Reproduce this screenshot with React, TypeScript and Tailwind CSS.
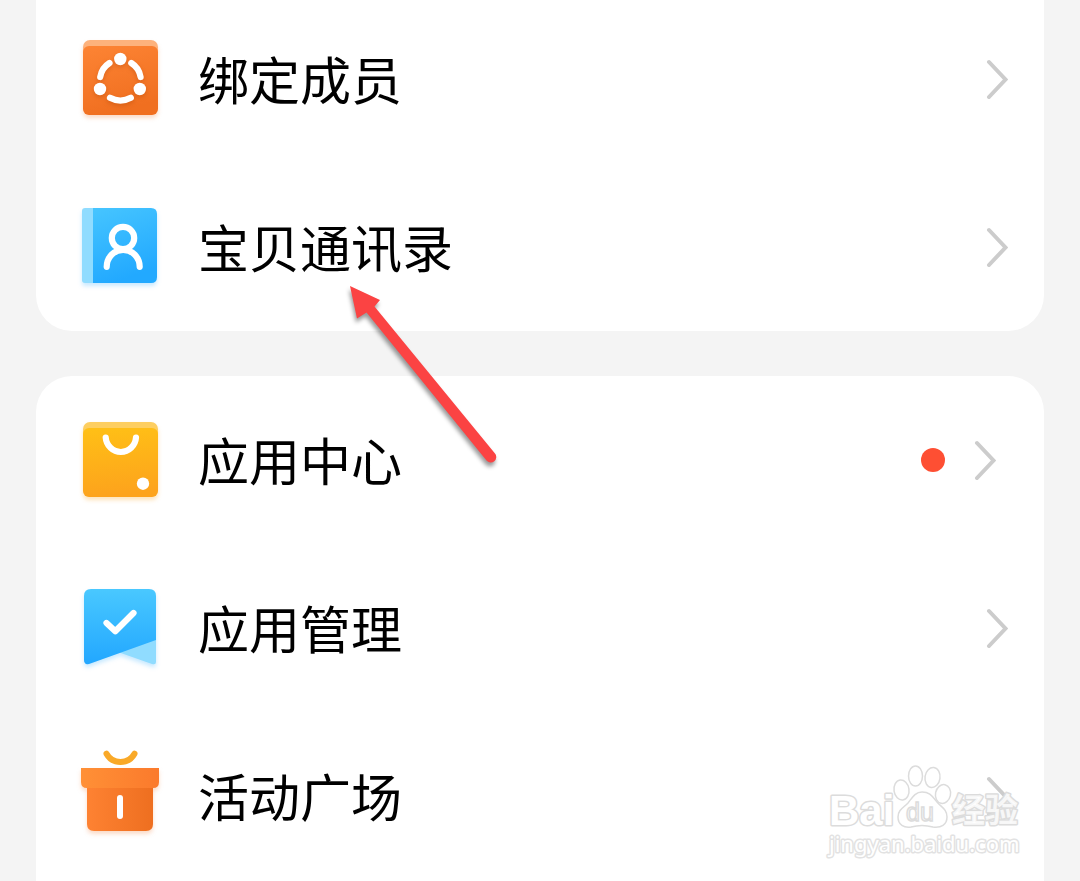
import type { ReactNode } from 'react';

interface MenuItem {
  label: string;
  icon: ReactNode;
  hasBadge?: boolean;
}

function MembersIcon() {
  return (
    <svg viewBox="0 0 96 96" className="size-24 shrink-0" aria-hidden="true">
      <defs>
        <linearGradient id="members-bg" x1="0" y1="0" x2="0.3" y2="1">
          <stop offset="0" stopColor="#fd8434" />
          <stop offset="1" stopColor="#f06f20" />
        </linearGradient>
      </defs>
      <g className="drop-shadow-[0_3px_2px_rgba(240,111,32,0.25)]">
        <rect x="11" y="9" width="75" height="40" rx="7" fill="#fdb27c" />
        <rect x="11" y="15" width="75" height="69" rx="6" fill="url(#members-bg)" />
      </g>
      <g className="drop-shadow-[0_2px_2px_rgba(160,60,0,0.3)]">
        <g fill="none" stroke="#fff" strokeWidth="6.2" strokeLinecap="round">
          <path d="M37.5 32A20.4 20.4 0 0 0 28.2 46" />
          <path d="M59.3 32A20.4 20.4 0 0 1 68.6 46" />
          <path d="M38 66.8A21.7 21.7 0 0 0 58.8 66.8" />
        </g>
        <g fill="#fff">
          <circle cx="48.3" cy="28" r="6.2" />
          <circle cx="28" cy="58" r="6.2" />
          <circle cx="67.8" cy="58" r="6.2" />
        </g>
      </g>
    </svg>
  );
}

function ContactsIcon() {
  return (
    <svg viewBox="0 0 96 96" className="size-24 shrink-0" aria-hidden="true">
      <defs>
        <linearGradient id="contacts-bg" x1="0" y1="0" x2="0.3" y2="1">
          <stop offset="0" stopColor="#46c5ff" />
          <stop offset="1" stopColor="#22a9ff" />
        </linearGradient>
      </defs>
      <g className="drop-shadow-[0_3px_2px_rgba(34,169,255,0.25)]">
        <path d="M13 9H22V84H13Q10 84 10 81V12Q10 9 13 9Z" fill="#90dcff" />
        <path d="M21 9H79Q85 9 85 15V78Q85 84 79 84H21Z" fill="url(#contacts-bg)" />
      </g>
      <g fill="none" stroke="#fff" strokeWidth="6.2" strokeLinecap="round">
        <circle cx="51" cy="39" r="11.2" />
        <path d="M34.7 67.8A16.5 17 0 0 1 67.7 67.8" />
      </g>
    </svg>
  );
}

function AppCenterIcon() {
  return (
    <svg viewBox="0 0 96 96" className="size-24 shrink-0" aria-hidden="true">
      <defs>
        <linearGradient id="center-bg" x1="0" y1="0" x2="0.1" y2="1">
          <stop offset="0" stopColor="#ffc016" />
          <stop offset="1" stopColor="#fda31c" />
        </linearGradient>
      </defs>
      <g className="drop-shadow-[0_3px_2px_rgba(253,163,28,0.3)]">
        <rect x="11" y="10" width="75" height="40" rx="7" fill="#fdce60" />
        <rect x="11" y="16" width="75" height="69" rx="6" fill="url(#center-bg)" />
      </g>
      <path
        d="M33.7 25.5A15.2 15.8 0 0 0 64 25.5"
        fill="none"
        stroke="#fff"
        strokeWidth="6.2"
        strokeLinecap="round"
      />
      <circle cx="71" cy="71.7" r="6.2" fill="#fff" />
    </svg>
  );
}

function AppManageIcon() {
  return (
    <svg viewBox="0 0 96 96" className="size-24 shrink-0" aria-hidden="true">
      <defs>
        <linearGradient id="manage-bg" x1="0" y1="0" x2="0" y2="1">
          <stop offset="0" stopColor="#49c8ff" />
          <stop offset="1" stopColor="#22a7ff" />
        </linearGradient>
      </defs>
      <g className="drop-shadow-[0_3px_2px_rgba(34,169,255,0.25)]">
        <path d="M46 72L84 59V82Q84 85 80 84Z" fill="#90dcff" />
        <path d="M19 9H77Q84 9 84 16V60L17 84Q12 85 12 80V16Q12 9 19 9Z" fill="url(#manage-bg)" />
      </g>
      <path
        d="M34.5 43L43.3 51.3L61.5 33"
        fill="none"
        stroke="#fff"
        strokeWidth="6.2"
        strokeLinecap="round"
        strokeLinejoin="round"
      />
    </svg>
  );
}

function ActivityIcon() {
  return (
    <svg viewBox="0 0 96 96" className="size-24 shrink-0" aria-hidden="true">
      <defs>
        <linearGradient id="gift-lid" x1="0" y1="0" x2="1" y2="0">
          <stop offset="0" stopColor="#ff9036" />
          <stop offset="1" stopColor="#fb7a2c" />
        </linearGradient>
        <linearGradient id="gift-box" x1="0" y1="0" x2="1" y2="0">
          <stop offset="0" stopColor="#fe8232" />
          <stop offset="1" stopColor="#ee6f20" />
        </linearGradient>
      </defs>
      <path
        d="M34.5 5.7A16 16 0 0 0 62.5 5.7"
        fill="none"
        stroke="#f9a928"
        strokeWidth="6"
        strokeLinecap="round"
      />
      <g className="drop-shadow-[0_3px_2px_rgba(240,111,32,0.25)]">
        <path d="M15 36H81V76Q81 83 74 83H22Q15 83 15 76Z" fill="url(#gift-box)" />
        <path d="M9 20H87V34Q87 40 81 40H15Q9 40 9 34Z" fill="url(#gift-lid)" />
      </g>
      <rect x="45" y="47" width="6" height="24" rx="3" fill="#fff" />
    </svg>
  );
}

function ChevronIcon() {
  return (
    <svg
      viewBox="0 0 24 40"
      className="h-10 w-6 shrink-0"
      fill="none"
      stroke="#cccccc"
      strokeWidth="4"
      strokeLinecap="round"
      aria-hidden="true"
    >
      <path d="M5 3L21.5 20.5L5 38" />
    </svg>
  );
}

// Red pointer drawn over both cards
function PointerArrow() {
  return (
    <svg
      viewBox="0 0 160 190"
      className="pointer-events-none absolute top-[280px] left-[344px] h-[190px] w-[160px] drop-shadow-[-1px_4px_2px_rgba(0,0,0,0.4)]"
      aria-hidden="true"
    >
      <path
        d="M6 6L36 20L30.5 26.5L151 173.5A5.5 5.5 0 0 1 142.5 180.5L22.5 32.5L13 38.5Z"
        fill="#fb4343"
      />
    </svg>
  );
}

function Watermark() {
  return (
    <svg
      viewBox="0 0 210 100"
      className="pointer-events-none absolute right-[50px] bottom-[21px] h-[100px] w-[210px] fill-white stroke-[#dcdcdc]"
      strokeWidth="1.5"
      role="img"
      aria-label="Baidu"
    >
      <g paintOrder="stroke" strokeWidth="3" strokeLinejoin="round" fontWeight="bold">
        <text x="9" y="65" fontSize="42" fontFamily="Liberation Sans">Bai</text>
        <text x="132" y="62" fontSize="33" fillOpacity="0.8" fontFamily="Noto Sans CJK SC">
          经验
        </text>
      </g>
      <g>
        <ellipse cx="81.5" cy="30" rx="7.5" ry="10" transform="rotate(-8 81.5 30)" />
        <ellipse cx="95.5" cy="16" rx="7" ry="10" />
        <ellipse cx="112.5" cy="17.5" rx="7.5" ry="10" transform="rotate(8 112.5 17.5)" />
        <ellipse cx="123" cy="34" rx="7.5" ry="9.5" transform="rotate(12 123 34)" />
        <path d="M102 32C95 32 92 38 88 43C83 48 78 50 78 57C78 65 84 68 91 67C98 65 106 65 113 67C121 68 127 65 127 57C127 49 121 47 117 42C112 36 110 32 102 32Z" />
      </g>
      <text x="86" y="61" fontSize="25" fontFamily="Liberation Sans">du</text>
      <text
        x="9"
        y="92"
        fontSize="22"
        fontFamily="Noto Sans"
        className="stroke-[#e2e2e2]"
        paintOrder="stroke"
        strokeWidth="3"
        strokeLinejoin="round"
      >
        jingyan.baidu.com
      </text>
    </svg>
  );
}

function MenuRow({ label, icon, hasBadge = false }: MenuItem) {
  return (
    <li>
      <a
        href="#"
        className={`flex h-[168px] items-center pl-9 ${hasBadge ? 'pr-12' : 'pr-9'}`}
      >
        {icon}
        <span className="ml-[30px] flex-1 pb-0.5 text-[51px] leading-none">{label}</span>
        {hasBadge && <span className="mr-[27px] size-6 rounded-full bg-[#fe4f33]" />}
        <ChevronIcon />
      </a>
    </li>
  );
}

const familyItems: MenuItem[] = [
  { label: '绑定成员', icon: <MembersIcon /> },
  { label: '宝贝通讯录', icon: <ContactsIcon /> },
];

const appItems: MenuItem[] = [
  { label: '应用中心', icon: <AppCenterIcon />, hasBadge: true },
  { label: '应用管理', icon: <AppManageIcon /> },
  { label: '活动广场', icon: <ActivityIcon /> },
];

export default function App() {
  return (
    <main className="relative flex h-screen flex-col overflow-hidden bg-[#f4f4f4] px-9 font-['Noto_Sans_CJK_SC',sans-serif] text-black">
      {/* First card is scrolled slightly past the top */}
      <ul className="-mt-[5px] mb-[45px] shrink-0 rounded-b-[36px] bg-white">
        {familyItems.map(item => (
          <MenuRow key={item.label} {...item} />
        ))}
      </ul>

      <ul className="flex-1 rounded-t-[36px] bg-white">
        {appItems.map(item => (
          <MenuRow key={item.label} {...item} />
        ))}
      </ul>

      <PointerArrow />
      <Watermark />
    </main>
  );
}
